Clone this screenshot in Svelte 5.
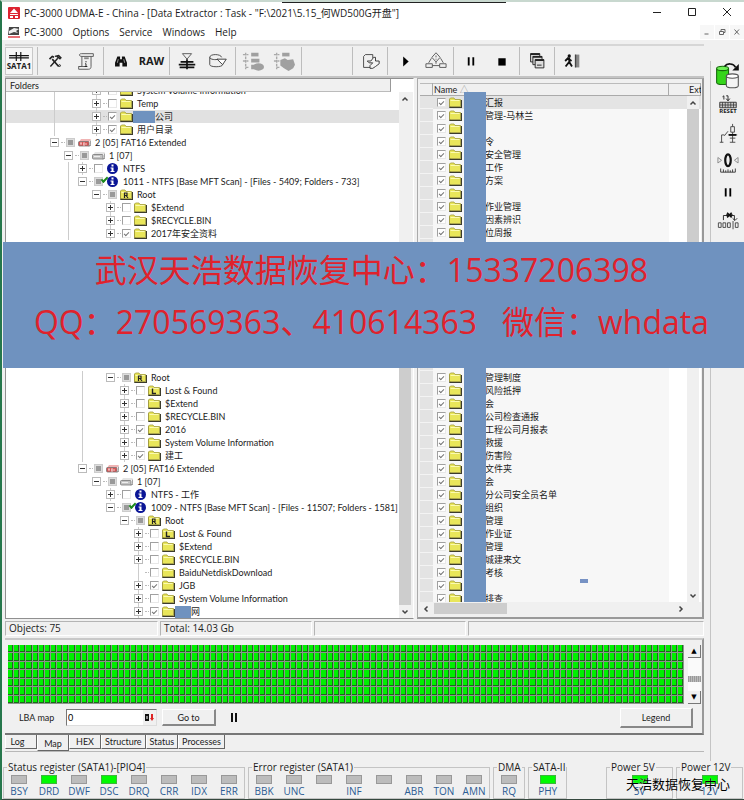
<script>
  // level = indent depth, lines = ancestor columns that carry a guide line
  const topRows = [
    { level: 3, icon: "folder", text: "System Volume Information", lines: [0], leaf: true },
    { level: 3, icon: "folder", text: "Temp", lines: [0], leaf: true },
    { level: 3, icon: "folder", text: "公司", lines: [0], leaf: true, check: "on", active: true, mask: 22 },
    { level: 3, icon: "folder", text: "用户目录", lines: [0], leaf: true, check: "on" },
    { level: 0, icon: "ext", text: "2 [05] FAT16 Extended", open: true, check: "mixed" },
    { level: 1, icon: "disk", text: "1 [07]", open: true, check: "mixed" },
    { level: 2, icon: "info", text: "NTFS", lines: [1], leaf: true },
    { level: 2, icon: "info", text: "1011 - NTFS [Base MFT Scan] - [Files - 5409; Folders - 733]", lines: [1], open: true, check: "mixed", done: true },
    { level: 3, icon: "R", text: "Root", lines: [1], open: true, check: "mixed" },
    { level: 4, icon: "folder", text: "$Extend", lines: [1], leaf: true },
    { level: 4, icon: "folder", text: "$RECYCLE.BIN", lines: [1], leaf: true },
    { level: 4, icon: "folder", text: "2017年安全资料", lines: [1], leaf: true, check: "on" },
  ];
  const bottomRows = [
    { level: 4, icon: "R", text: "Root", lines: [2], open: true, check: "mixed" },
    { level: 5, icon: "L", text: "Lost & Found", lines: [2], leaf: true },
    { level: 5, icon: "folder", text: "$Extend", lines: [2], leaf: true },
    { level: 5, icon: "folder", text: "$RECYCLE.BIN", lines: [2], leaf: true },
    { level: 5, icon: "folder", text: "2016", lines: [2], leaf: true, check: "on" },
    { level: 5, icon: "folder", text: "System Volume Information", lines: [2], leaf: true },
    { level: 5, icon: "folder", text: "建工", lines: [2], leaf: true, check: "on" },
    { level: 2, icon: "ext", text: "2 [05] FAT16 Extended", open: true, check: "mixed" },
    { level: 3, icon: "disk", text: "1 [07]", open: true, check: "mixed" },
    { level: 4, icon: "info", text: "NTFS - 工作", leaf: true },
    { level: 4, icon: "info", text: "1009 - NTFS [Base MFT Scan] - [Files - 11507; Folders - 1581]", open: true, check: "mixed", done: true },
    { level: 5, icon: "R", text: "Root", open: true, check: "mixed" },
    { level: 6, icon: "L", text: "Lost & Found", leaf: true },
    { level: 6, icon: "folder", text: "$Extend", leaf: true },
    { level: 6, icon: "folder", text: "$RECYCLE.BIN", leaf: true },
    { level: 6, icon: "folder", text: "BaiduNetdiskDownload", leaf: true, bare: true },
    { level: 6, icon: "folder", text: "JGB", leaf: true, check: "on" },
    { level: 6, icon: "folder", text: "System Volume Information", leaf: true },
    { level: 6, icon: "folder", text: "网", leaf: true, check: "on", mask: 16 },
  ];

  const topFiles = ["汇报", "管理-马林兰", "", "令", "安全管理", "工作", "方案", "", "作业管理", "因素辨识", "位周报"];
  const bottomFiles = [
    "管理制度", "风险抵押", "会", "公司检查通报", "工程公司月报表", "救援", "伤害险", "文件夹", "会",
    "分公司安全员名单", "组织", "管理", "作业证", "管理", "城建来文", "考核", "", "排查",
  ];

  const menus = ["PC-3000", "Options", "Service", "Windows", "Help"];
  const toolGroups = [
    ["tools", "script"],
    ["find", "raw"],
    ["adder", "drive"],
    ["list", "listdrive"],
    [],
    ["page"],
    ["play", "scheme"],
    ["pause", "stop"],
    ["copies"],
    ["exit"],
  ];
  const sideTools = ["drives", "reset", "power", "gauge", "pause", "bits"];
  const tabs = ["Log", "Map", "HEX", "Structure", "Status", "Processes"];
  const cells = Array.from({ length: 770 });

  const registers = [
    { title: "Status register (SATA1)-[PIO4]", leds: ["BSY", "DRD", "DWF", "DSC", "DRQ", "CRR", "IDX", "ERR"], on: ["DRD", "DSC"] },
    { title: "Error register (SATA1)", leds: ["BBK", "UNC", "", "INF", "", "ABR", "TON", "AMN"], on: [] },
    { title: "DMA", leds: ["RQ"], on: [] },
    { title: "SATA-II", leds: ["PHY"], on: ["PHY"] },
  ];
  const power = [
    { title: "Power 5V", leds: ["5V"], on: ["5V"] },
    { title: "Power 12V", leds: ["12V"], on: ["12V"] },
  ];

  let activeTab = $state("Map");
  let lba = $state("0");
</script>

{#snippet nodeIcon(kind)}
  <svg class="node-icon" viewBox="0 0 13 11" aria-hidden="true">
    {#if kind === "info"}
      <circle cx="6.5" cy="5.5" r="5.5" fill="#0a1596" />
      <path d="M5.5 1.5h2v2h-2zM4.5 4.5h3v3.5h1v1h-4v-1h1v-2.5h-1z" fill="#fff" />
    {:else if kind === "ext" || kind === "disk"}
      <path d="M1 5l2-3h10l-2 3z" fill={kind === "ext" ? "#f0b4b4" : "#e4e4e4"} />
      <rect x="0.5" y="4.5" width="10.5" height="4.5" rx="1" fill={kind === "ext" ? "#d65555" : "#c4c4c4"} stroke="#777" stroke-width="0.8" />
      <path d="M11 9.5l2-2V3.500" fill="none" stroke="#444" />
      {#if kind === "ext"}
        <path d="M2 6h2M3 6v2M5 6h2M5 7h1.500M5 8h2M8 6v2" stroke="#fff" stroke-width="0.7" />
      {:else}
        <path d="M2 6.5h6" stroke="#eee" />
      {/if}
    {:else}
      <path d="M1 2.500V10.500H12.500V3" fill="none" stroke="#3c3c2c" stroke-width="1.5" />
      <path d="M0.500 9.500V2l1-1h3.500l1 1.500h5.500v7z" fill="#e9e65a" stroke="#a29c3a" stroke-width="0.8" />
      <path d="M1.500 3.500h9" stroke="#fbfab0" />
      {#if kind === "R"}
        <path d="M4.500 9V4h2.500v2.500h-2M6 6.500l2 2.500" fill="none" stroke="#222" stroke-width="1.2" />
      {:else if kind === "L"}
        <path d="M4.500 3.500V8.500h3.500" fill="none" stroke="#222" stroke-width="1.4" />
      {/if}
    {/if}
  </svg>
{/snippet}

{#snippet toolIcon(kind)}
  <svg class="tool-icon" viewBox="0 0 24 24" fill="none" stroke="#222" aria-hidden="true">
    {#if kind === "tools"}
      <path d="M7 18l8-9M14 7l4 3M12 7l4-1 3 3" stroke-width="1.5" />
      <path d="M9 10l7 8M6 10l3-3 2 1" stroke-width="1.8" />
      <circle cx="17" cy="17" r="1" />
    {:else if kind === "script"}
      <path d="M7 4h13v3h-2.500v11c0 2-1 3-3 3H4v-3h3.500V7C4 7 4 4 7 4zM7.500 7h10M4 18h9" stroke="#555" />
      <path d="M10 9h5" stroke="#888" stroke-width="2" />
      <path d="M12 12v1.500M11 15h1v3M10.500 18h3" />
    {:else if kind === "find"}
      <path d="M8 7h3v3h2V7h3l2.500 7v4h-5v-4h-3v4h-5v-4z" fill="#111" stroke="none" />
      <path d="M8 14l1-4M16 14l-1-4" stroke="#ddd" stroke-width="0.7" />
    {:else if kind === "adder"}
      <path d="M7 4h10l-5 6z" stroke="#555" />
      <path d="M12 10v11" stroke-width="2" />
      <path d="M5 13h14M3 16h18M4 19h16" stroke-width="2" stroke="#111" />
    {:else if kind === "drive"}
      <path d="M3 8v8c0 3 14 3 14 0v-1M3 8c0-4 12-4 13 0M3 8c0 2.500 7 3 9 2" stroke="#444" />
      <path d="M11 10h10l-4 6z" fill="#fff" stroke="#333" />
    {:else if kind === "list" || kind === "listdrive"}
      <path d="M4 3v18M1 5h6M1 12h6M4 19h4" stroke="#aaa" stroke-width="1.5" stroke-dasharray="3 1" />
      <g fill="#a0a0a0" stroke="none">
        <path d="M10 3h8v4h-8z" />
        {#if kind === "list"}
          <path d="M10 9.500h9v4h-9zM10 16h5v5h-5z" />
          <ellipse cx="18" cy="18.500" rx="6" ry="4" />
        {:else}
          <path d="M8 11l5-2 3 2 6-1 2 6-2 4-5 3-5-3-4-3z" />
        {/if}
      </g>
    {:else if kind === "page"}
      <path d="M14 19H5V7l2-2h8v4" stroke="#444" />
      <path d="M9 12h4l3-4h2v4h4v3l-4 3-3 2h-3v-3l3-3h-4z" fill="#f4f4f4" stroke="#333" />
    {:else if kind === "play"}
      <path d="M10 7l6 5.500-6 5.500z" fill="#000" stroke="none" />
    {:else if kind === "scheme"}
      <path d="M12 3l4.500 5-4.500 5-4.500-5zM12 6v2M12 9.500v1M7 9L4 14M17 9l3 5M12 13v2" stroke="#555" />
      <path d="M1 15h7v4H1zM16 15h7v4h-7zM8 17h8" stroke="#555" />
    {:else if kind === "pause"}
      <path d="M9.500 8v9M14.500 8v9" stroke="#000" stroke-width="2" />
    {:else if kind === "stop"}
      <path d="M8 9h8v8H8z" fill="#000" stroke="none" />
    {:else if kind === "copies"}
      <g fill="#ddd">
        <path d="M5 4h10v9H5z" /><path d="M7.500 7h10v9h-10z" /><path d="M10 10.500h9.500v9H10z" />
      </g>
      <path d="M5 4.500h10M7.500 7.500h10M10 11h9.500" stroke-width="2" />
      <path d="M12 16.500h5" />
    {:else if kind === "exit"}
      <path d="M15 5h5v14h-5z" fill="#888" stroke="none" />
      <path d="M16 5v14" stroke="#333" />
      <circle cx="9" cy="6.500" r="1.8" fill="#111" stroke="none" />
      <path d="M9 8v5l3 5M9 13l-4 5M4.500 12l3-3 4 3" stroke="#111" stroke-width="2" />
    {:else if kind === "drives"}
      <path d="M1.500 5v13c0 2.500 11 2.500 11 0V5" fill="#35d51a" stroke="#176c0c" />
      <ellipse cx="7" cy="5" rx="5.500" ry="2" fill="#6df055" stroke="#176c0c" />
      <path d="M10.500 12v9c0 2.500 11 2.500 11 0v-9" fill="#f4f4f4" stroke="#555" />
      <ellipse cx="16" cy="12" rx="5.500" ry="2" fill="#fff" stroke="#555" />
      <path d="M9 3c2-3 8-3 10 1" stroke="#111" stroke-width="1.5" />
      <path d="M22 1v6h-6z" fill="#111" stroke="none" />
    {:else if kind === "reset"}
      <path d="M6 3l1.500-1v4M10 2h2v5M10 5l2 2.500L14 5" />
      <path d="M3 9h18v6H3z" fill="#ccc" stroke="#333" />
      <path d="M6 9v6M9 9v6M12 9v6M15 9v6M18 9v6M3 12h18" stroke="#333" stroke-width="0.8" />
    {:else if kind === "power"}
      <path d="M3 21h4M5 21v-8h3M8 14l4-5M17 1v3M15 4h4v6h-4zM17 10v11M12 13h10M14 16.500h6M14 21h6" stroke="#444" />
      <path d="M13 13h8" stroke="#111" stroke-width="2" />
    {:else if kind === "gauge"}
      <path d="M1 6l4 3-4 3zM23 6l-4 3 4 3z" stroke="#888" />
      <ellipse cx="12" cy="9" rx="3" ry="6.500" stroke="#111" stroke-width="2.4" />
      <path d="M4 18v4h16v-4M7 19v3M9.500 20v2M12 19v3M14.500 20v2M17 19v3" stroke="#333" />
    {:else if kind === "bits"}
      <path d="M7 11V6h12v5M17 9l2.500 2.500L22 9" />
      <path d="M11 3l5 5M16 3l-5 5M10 5.500h7" stroke="#111" stroke-width="1.8" />
      <path d="M1.500 14h3v5h-3zM6.500 14h3v5h-3zM11.500 14h3v5h-3zM20 14h3v5h-3zM17.500 12v9" stroke="#444" />
    {/if}
  </svg>
{/snippet}

{#snippet arrow(dir)}
  <svg class="arrow {dir}" viewBox="0 0 8 8" aria-hidden="true">
    <path d="M1.500 5.500L4 3l2.500 2.500" fill="none" stroke="#444" stroke-width="1.5" />
  </svg>
{/snippet}

{#snippet treeRow(row)}
  <div class="row" class:active={row.active}>
    {#each { length: row.level } as _, i}
      <span class="cell" class:line={row.lines?.includes(i)}></span>
    {/each}
    <span class="cell" class:line={row.leaf}>
      {#if !row.bare}
        <button class="expander" class:open={row.open} aria-label="Toggle {row.text}"></button>
      {/if}
    </span>
    <span class="stub"></span>
    <label class="node">
      <input type="checkbox" checked={row.check === "on"} class:mixed={row.check === "mixed"} />
      {@render nodeIcon(row.icon)}
      {#if row.mask}<span class="mask" style="width: {row.mask}px"></span>{/if}
      <span>{row.text}</span>
      {#if row.done}<span class="done"></span>{/if}
    </label>
  </div>
{/snippet}

{#snippet fileRow(name, active)}
  <tr class:active>
    <td class="gutter"></td>
    <td class="name">
      <label class="file">
        <input type="checkbox" checked />
        {@render nodeIcon("folder")}
        <span class="file-name">{name}</span>
      </label>
    </td>
    <td class="ext"></td>
  </tr>
{/snippet}

{#snippet register(group)}
  <fieldset class="register">
    <legend>{group.title}</legend>
    <div class="leds">
      {#each group.leds as led}
        <div class="led">
          <span class="lamp" class:on={group.on.includes(led)}></span>
          <span class="led-name">{led}</span>
        </div>
      {/each}
    </div>
  </fieldset>
{/snippet}

<div class="window">
  <div class="notch"></div>
  <header class="titlebar">
    <svg class="logo" viewBox="0 0 12 12" aria-hidden="true">
      <rect width="12" height="12" rx="1" fill="#dc2430" />
      <path d="M6 1.500L10 6H2zM2 7h8v1H2zM2 9h3v2H2zM7 9h3v2H7z" fill="#fff" />
    </svg>
    <h1>PC-3000 UDMA-E - China - [Data Extractor : Task - "F:\2021\5.15_何WD500G开盘"]</h1>
    <div class="caption">
      <button aria-label="Minimize"><svg viewBox="0 0 10 10"><path d="M1 5.500h8" /></svg></button>
      <button aria-label="Maximize"><svg viewBox="0 0 10 10"><path d="M1.500 1.500h7v7h-7z" /></svg></button>
      <button aria-label="Close"><svg viewBox="0 0 10 10"><path d="M1 1l8 8M9 1L1 9" /></svg></button>
    </div>
  </header>

  <nav class="menubar">
    <svg class="logo" viewBox="0 0 12 12" aria-hidden="true">
      <path d="M1 1h10v8H0z" fill="#444" />
      <path d="M1 5l5-3 5 1-3 2 2 2-4-1-5 2z" fill="#eee" />
      <path d="M0 11h12" stroke="#dc4048" stroke-width="1.5" />
    </svg>
    {#each menus as menu}
      <button class="menu">{menu}</button>
    {/each}
    <div class="mdi">
      <button aria-label="Minimize child"><svg viewBox="0 0 8 8"><path d="M1.500 6h4" /></svg></button>
      <button aria-label="Restore child"><svg viewBox="0 0 8 8"><path d="M1.500 3.500h4v3h-4zM3 3V1.500h4v3H6" /></svg></button>
      <button aria-label="Close child"><svg viewBox="0 0 8 8"><path d="M1.500 1.500l4.500 5M6 1.500l-4.500 5" /></svg></button>
    </div>
  </nav>

  <div class="body">
    <main>
      <div class="toolbar">
        <button class="port">
          <svg viewBox="0 0 24 10" aria-hidden="true">
            <path d="M1 4h22M1 6.500h22M9 0v10M14 0v10" stroke="#111" stroke-width="1.3" />
          </svg>
          SATA1
        </button>
        {#each toolGroups as group}
          <div class="tool-group" class:blank={!group.length}>
            {#each group as tool}
              <button class="tool" aria-label={tool}>
                {#if tool === "raw"}<b>RAW</b>{:else}{@render toolIcon(tool)}{/if}
              </button>
            {/each}
          </div>
        {/each}
      </div>

      <div class="panes">
        <section class="tree-pane">
          <h2>Folders</h2>
          <div class="tree-body">
            <div class="tree">
              {#each topRows as row}{@render treeRow(row)}{/each}
              <div class="skipped"></div>
              {#each bottomRows as row}{@render treeRow(row)}{/each}
            </div>
            <div class="vscroll">
              <button aria-label="Scroll up">{@render arrow("up")}</button>
              <div class="thumb low"></div>
              <button aria-label="Scroll down">{@render arrow("down")}</button>
            </div>
          </div>
        </section>

        <section class="file-pane">
          <div class="files">
            <table>
              <thead>
                <tr><th class="gutter"></th><th class="name">Name <span class="sort">△</span></th><th class="ext">Ext</th></tr>
              </thead>
              <tbody>
                {#each topFiles as name, i}{@render fileRow(name, i === 0)}{/each}
                <tr class="skipped"><td class="gutter"></td><td class="name"></td><td class="ext"></td></tr>
                {#each bottomFiles as name}{@render fileRow(name, false)}{/each}
              </tbody>
            </table>
            <div class="strip"></div>
            <div class="fleck"></div>
            <div class="vscroll over">
              <button aria-label="Scroll up">{@render arrow("up")}</button>
              <div class="thumb high"></div>
              <button aria-label="Scroll down">{@render arrow("down")}</button>
            </div>
          </div>
          <div class="hscroll">
            <button aria-label="Scroll left">{@render arrow("left")}</button>
            <div class="hthumb"></div>
            <button aria-label="Scroll right">{@render arrow("right")}</button>
          </div>
        </section>
      </div>

      <div class="statusbar">
        <span>Objects: 75</span>
        <span>Total: 14.03 Gb</span>
        <span></span>
        <span></span>
      </div>

      <section class="map-panel">
        <div class="map-row">
          <div class="map">
            {#each cells as _}<i></i>{/each}
          </div>
          <div class="map-scroll">
            <button aria-label="Map up">▲</button>
            <div class="grip"></div>
            <button aria-label="Map down">▼</button>
          </div>
        </div>
        <div class="lba-row">
          <label for="lba">LBA map</label>
          <div class="lba-box">
            <input id="lba" type="text" bind:value={lba} />
            <button aria-label="Number base">
              <svg viewBox="0 0 9 7" aria-hidden="true">
                <path d="M0 0h4v7H0z" fill="#111" /><path d="M1.500 2h1v3h-1z" fill="#fff" />
                <path d="M6 0h2v4h1L7 7 5 4h1z" fill="#d22" />
              </svg>
            </button>
          </div>
          <button class="raised goto">Go to</button>
          <button class="hold" aria-label="Pause"></button>
          <button class="raised legend-btn">Legend</button>
        </div>
      </section>

      <div class="tabs">
        {#each tabs as tab}
          <button class:active={activeTab === tab} onclick={() => (activeTab = tab)}>{tab}</button>
        {/each}
      </div>
      <div class="tab-foot"></div>
    </main>

    <aside>
      {#each sideTools as tool}
        <button class="side-tool" aria-label={tool}>
          {@render toolIcon(tool)}
          {#if tool === "reset"}<span class="caption-text">RESET</span>{/if}
        </button>
      {/each}
    </aside>
  </div>

  <footer>
    {#each registers as group}{@render register(group)}{/each}
    <div class="spacer"></div>
    {#each power as group}{@render register(group)}{/each}
    <div class="stamp">天浩数据恢复中心</div>
  </footer>

  <div class="banner">
    <p>武汉天浩数据恢复中心：15337206398</p>
    <p>QQ：270569363、410614363   微信：whdata</p>
  </div>
</div>

<style>
  :global(body) { margin: 0; background: #f0f0f0; }
  .window {
    --ui: "Open Sans", "Noto Sans CJK SC", sans-serif;
    --small: Lato, "Noto Sans CJK SC", sans-serif;
    --blue: #6f92bf;
    position: relative;
    box-sizing: border-box;
    overflow: hidden;
    border-top: 2px solid #c8d8cf;
    border-left: 2px solid #26774c;
    border-bottom: 2px solid #35483e;
    background: #f0f0f0;
    color: #1c1c1c;
    font: 10px/12px var(--ui);
  }
  button { margin: 0; padding: 0; border: 0; background: none; color: inherit; font: inherit; }
  h1, h2, p { margin: 0; font: inherit; }
  .notch { position: absolute; top: 0; left: 280px; width: 224px; height: 1px; background: #222; }

  .titlebar { display: flex; align-items: center; height: 22px; padding-left: 6px; background: #fff; }
  .logo { width: 12px; height: 12px; margin-right: 4px; }
  .caption { display: flex; margin-left: auto; }
  .caption button { width: 35px; height: 20px; }
  .caption svg { width: 10px; height: 10px; fill: none; stroke: #222; }
  .menubar { display: flex; align-items: center; height: 16px; padding-left: 6px; background: #fff; }
  .menu { margin-right: 10px; }
  .mdi { display: flex; gap: 1px; margin-left: auto; }
  .mdi button { display: grid; place-items: center; width: 14px; height: 14px; background: #f7f7f7; }
  .mdi svg { width: 8px; height: 8px; fill: none; stroke: #666; }

  .body { display: grid; grid-template-columns: 1fr 34px; gap: 6px; padding: 4px 0 0 3px; }
  main { min-width: 0; }
  .toolbar {
    display: flex;
    align-items: center;
    height: 30px;
    border-top: 2px solid #d6d6d6;
    border-bottom: 2px solid #c4c4c4;
  }
  .port {
    display: flex;
    flex-direction: column;
    align-items: center;
    justify-content: center;
    width: 28px;
    height: 28px;
    margin-right: 4px;
    border: 1px solid #c8c8c8;
    background: #f6f6f6;
    box-sizing: border-box;
    font-size: 8px;
    line-height: 9px;
    font-weight: 700;
  }
  .port svg { width: 22px; height: 9px; }
  .tool-group { display: flex; height: 28px; padding: 0 2px 0 1px; border-left: 1px solid #bdbdbd; }
  .tool-group.blank { width: 47px; }
  .tool { display: grid; place-items: center; width: 31px; }
  .tool b { font-size: 11px; }
  .tool-icon { width: 22px; height: 22px; }

  .panes { display: grid; grid-template-columns: 409px 1fr; gap: 3px; height: 541px; }
  .tree-pane { display: flex; flex-direction: column; border: 1px solid #909090; border-right-color: #fff; background: #fff; font: 9px/13px var(--small); overflow: hidden; }
  .tree-pane h2 {
    position: relative;
    z-index: 1;
    flex: none;
    height: 12px;
    margin-right: 22px;
    padding-left: 4px;
    border-right: 1px solid #999;
    border-bottom: 1px solid #bbb;
    background: #f0f0f0;
  }
  .tree-body { display: flex; flex: 1; min-height: 0; }
  .tree { flex: 1; min-width: 0; margin-top: -8px; }
  .row { display: flex; align-items: center; height: 13px; padding-left: 41px; white-space: nowrap; }
  .row.active { background: #e1e1e1; }
  .cell { display: grid; place-items: center; flex: none; width: 14px; height: 13px; }
  .line { background: linear-gradient(#ccc, #ccc) center / 1px 100% no-repeat; }
  .expander {
    width: 7px;
    height: 7px;
    border: 1px solid #bbb;
    background:
      linear-gradient(#333, #333) center / 5px 1px no-repeat,
      linear-gradient(#333, #333) center / 1px 5px no-repeat,
      #fff;
    box-sizing: content-box;
  }
  .expander.open { background: linear-gradient(#333, #333) center / 5px 1px no-repeat, #fff; }
  .stub { width: 4px; margin-right: 1px; border-top: 1px dotted #bbb; }
  .node { position: relative; display: flex; align-items: center; }
  .done {
    position: absolute;
    top: 2px;
    left: 7px;
    width: 5px;
    height: 2px;
    border-left: 2px solid #1c8a1c;
    border-bottom: 2px solid #1c8a1c;
    transform: rotate(-45deg);
  }
  input[type="checkbox"] {
    appearance: none;
    display: grid;
    place-items: center;
    flex: none;
    box-sizing: border-box;
    width: 9px;
    height: 9px;
    margin: 0 3px 0 0;
    border: 1px solid #e8e8e8;
    border-top-color: #a0a0a0;
    border-left-color: #a0a0a0;
    background: #fff;
  }
  input[type="checkbox"]:checked::after {
    content: "";
    width: 4px;
    height: 2px;
    margin-bottom: 1px;
    border-left: 1px solid #777;
    border-bottom: 1px solid #777;
    transform: rotate(-45deg);
  }
  input[type="checkbox"].mixed { border-color: #ccc; background: #999; box-shadow: inset 0 0 0 1px #ddd; }
  .node-icon { flex: none; width: 13px; height: 11px; margin-right: 4px; }
  .mask { flex: none; height: 12px; margin-left: -4px; background: var(--blue); }
  .tree .skipped { height: 131px; }

  .vscroll { display: flex; flex-direction: column; flex: none; width: 12px; background: #f0f0f0; }
  .tree-body .vscroll { padding-right: 2px; }
  .vscroll button, .hscroll button { display: grid; place-items: center; width: 12px; height: 13px; }
  .thumb { flex: 1; background: #cdcdcd; }
  .thumb.low { margin-top: 200px; }
  .thumb.high { margin-bottom: 300px; }
  .arrow { width: 8px; height: 8px; }
  .arrow.down { transform: rotate(180deg); }
  .arrow.left { transform: rotate(-90deg); }
  .arrow.right { transform: rotate(90deg); }

  .file-pane {
    min-width: 0;
    box-sizing: border-box;
    padding: 4px 1px 1px 2px;
    border: 1px solid #aaa;
    border-right: 2px solid #999;
    border-bottom: 2px solid #999;
    font: 9px/13px var(--small);
  }
  .files { position: relative; height: 519px; overflow: hidden; background: #fff; }
  table { width: 100%; border-collapse: collapse; table-layout: fixed; }
  th, td { height: 13px; padding: 0; font-weight: 400; text-align: left; }
  th { background: #f0f0f0; box-shadow: inset -1px -1px #aaa, inset 0 1px #bbb; white-space: nowrap; overflow: hidden; }
  th.gutter { width: 13px; }
  th.name { padding-left: 1px; }
  th.ext { width: 12px; padding-left: 20px; }
  td.gutter { background: #e3e3e3; box-shadow: inset 0 -1px #f3f3f3; }
  td.name { background: #f7f7f7; }
  tr.active td { background: #e4e4e4; }
  .sort { color: #999; }
  .files .skipped td { height: 132px; }
  .file { display: flex; align-items: center; height: 13px; padding-left: 4px; white-space: nowrap; }
  .file-name { margin-left: 19px; }
  .strip { position: absolute; top: 9px; bottom: 0; left: 44px; width: 22px; background: var(--blue); }
  .fleck { position: absolute; top: 496px; left: 160px; width: 8px; height: 4px; background: #7792c4; }
  .vscroll.over { position: absolute; top: 13px; right: 2px; bottom: 0; }
  .hscroll { display: flex; height: 13px; padding-right: 14px; background: #f0f0f0; }
  .hthumb { width: 73px; margin: 1px auto 1px 2px; background: #cdcdcd; }

  .statusbar { display: grid; grid-template-columns: 153px 152px 152px 1fr; gap: 2px; padding: 2px 0; }
  .statusbar span { height: 13px; padding-left: 3px; border: 1px solid #b4b4b4; border-right-color: #fff; border-bottom-color: #fff; line-height: 13px; }

  .map-panel {
    padding: 5px 1px 2px 3px;
    border-top: 2px solid #c8c8c8;
    border-right: 2px solid #999;
    border-bottom: 2px solid #777;
    font: 9px/13px var(--small);
  }
  .map-row { display: flex; gap: 4px; height: 59px; }
  .map { display: grid; flex: 1; grid-template-columns: repeat(110, 1fr); grid-auto-rows: 1fr; min-width: 0; background: #8c968c; }
  .map i { border: solid #1c6a1c; border-width: 0 1px 1px 0; margin: 0 1px 1px 0; background: #00f000; }
  .map-scroll { display: flex; flex-direction: column; align-items: center; justify-content: space-between; width: 13px; background: #fafafa; }
  .map-scroll button { width: 13px; height: 13px; border-right: 1px solid #777; border-bottom: 1px solid #777; background: #f0f0f0; font: 7px/12px "DejaVu Sans", sans-serif; color: #000; box-sizing: border-box; }
  .grip { width: 13px; height: 6px; margin-top: 8px; background: repeating-linear-gradient(90deg, #999 0 1px, #bbb 1px 2px); }
  .lba-row { display: flex; align-items: center; height: 27px; padding: 0 8px 0 11px; }
  .lba-row label { width: 47px; }
  .lba-box { display: flex; width: 89px; height: 15px; border: 1px solid #777; border-right-color: #ddd; border-bottom-color: #ddd; background: #fff; }
  .lba-box input { flex: 1; min-width: 0; padding: 0 1px; border: 0; background: none; font: inherit; }
  .lba-box button { display: grid; place-items: center; width: 13px; background: #f0f0f0; }
  .lba-box svg { width: 9px; height: 7px; }
  .raised { height: 17px; border: 1px solid #fff; border-right: 2px solid #888; border-bottom: 2px solid #888; background: #f0f0f0; box-sizing: border-box; line-height: 13px; }
  .goto { width: 54px; margin-left: 5px; }
  .hold { width: 6px; height: 9px; margin-left: 15px; border: solid #111; border-width: 0 2px; box-sizing: border-box; }
  .legend-btn { width: 73px; height: 20px; margin-left: auto; }

  .tabs { display: flex; height: 16px; font: 9px/12px var(--small); }
  .tabs button { height: 14px; padding: 0 3px; border: 1px solid #fff; border-right-color: #666; border-bottom-color: #666; border-top: 0; }
  .tabs button:nth-child(-n + 3) { width: 32px; }
  .tabs button:first-child { padding-right: 10px; }
  .tabs button.active { height: 16px; padding-top: 2px; }
  .tab-foot { height: 9px; border-top: 1px solid #b8b8b8; }

  aside { display: flex; flex-direction: column; margin-top: 17px; padding-left: 4px; border-left: 1px solid #c4c4c4; }
  .side-tool { display: flex; flex-direction: column; align-items: center; justify-content: center; width: 26px; height: 29px; }
  .side-tool .tool-icon { flex: none; }
  .side-tool:first-child .tool-icon { width: 26px; height: 26px; }
  .caption-text { margin-top: -8px; font-size: 6px; line-height: 7px; font-weight: 700; }

  footer { position: relative; display: flex; gap: 3px; padding: 0 1px; }
  .register { min-width: 0; margin: 0; padding: 2px 0 0; border: 1px solid #c4c4c4; }
  .register legend { margin-left: 3px; padding: 0 1px; line-height: 12px; white-space: nowrap; }
  .leds { display: flex; justify-content: center; }
  .led { display: flex; flex-direction: column; align-items: center; width: 30px; }
  .lamp { width: 14px; height: 7px; border: 1px solid #999; background: #bcbcbc; }
  .lamp.on { border-color: #3db53d; background: #00fa00; }
  .led-name { height: 14px; color: #2c5c94; line-height: 14px; }
  .spacer { flex: 1; }
  .spacer ~ .register { flex: 0 0 65px; }
  .stamp { position: absolute; right: 14px; bottom: 8px; color: #000; font-size: 13px; line-height: 14px; text-shadow: 0 0 1px #fff; }

  .banner { position: absolute; top: 240px; left: 1px; right: 0; height: 124px; padding-top: 2px; background: var(--blue); color: #e0222c; font-size: 32px; line-height: 52px; text-align: center; }
  .banner p { padding-right: 4px; white-space: pre; }
</style>
